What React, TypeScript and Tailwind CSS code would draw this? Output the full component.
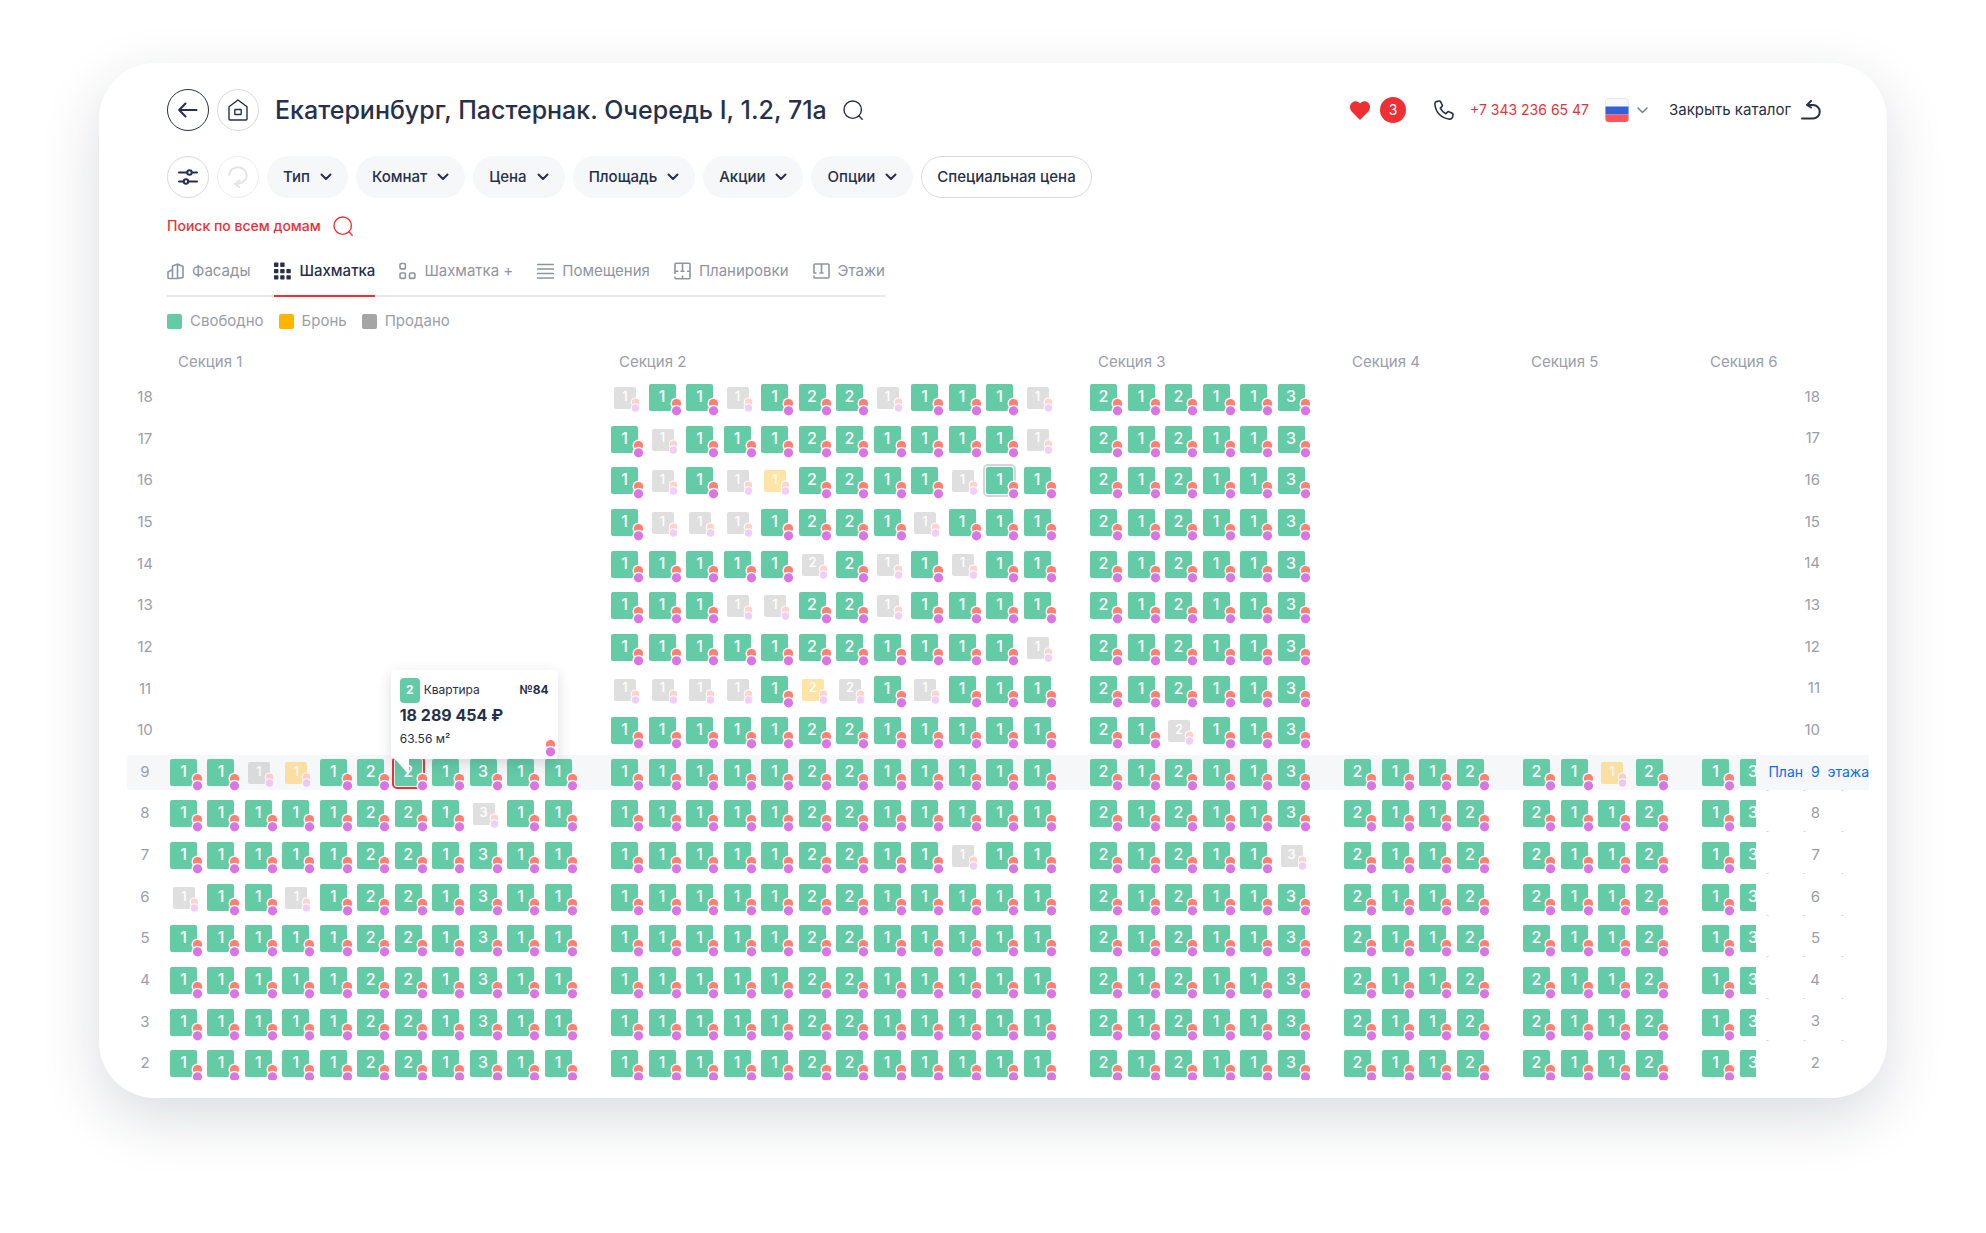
import type { ReactNode } from "react";
import clsx from "clsx";

type Floor = { number: number; sections: string[] };

// Room count of each flat. "s" before it marks a sold flat, "b" a booked one,
// "*" the flat under the pointer, "!" the open one; "-" is a flat without a count.
const S1 = "1 1 1 1 1 2 2 1 3 1 1";
const S2 = "1 1 1 1 1 2 2 1 1 1 1 1";
const S3 = "2 1 2 1 1 3";
const S4 = "2 1 1 2";
const S6 = "1 3 - -";

const floors: Floor[] = [
  { number: 18, sections: ["", "s1 1 1 s1 1 2 2 s1 1 1 1 s1", S3, "", "", ""] },
  { number: 17, sections: ["", "1 s1 1 1 1 2 2 1 1 1 1 s1", S3, "", "", ""] },
  { number: 16, sections: ["", "1 s1 1 s1 b1 2 2 1 1 s1 *1 1", S3, "", "", ""] },
  { number: 15, sections: ["", "1 s1 s1 s1 1 2 2 1 s1 1 1 1", S3, "", "", ""] },
  { number: 14, sections: ["", "1 1 1 1 1 s2 2 s1 1 s1 1 1", S3, "", "", ""] },
  { number: 13, sections: ["", "1 1 1 s1 s1 2 2 s1 1 1 1 1", S3, "", "", ""] },
  { number: 12, sections: ["", "1 1 1 1 1 2 2 1 1 1 1 s1", S3, "", "", ""] },
  { number: 11, sections: ["", "s1 s1 s1 s1 1 b2 s2 1 s1 1 1 1", S3, "", "", ""] },
  { number: 10, sections: ["", S2, "2 1 s2 1 1 3", "", "", ""] },
  { number: 9, sections: ["1 1 s1 b1 1 2 !2 1 3 1 1", S2, S3, S4, "2 1 b1 2", S6] },
  { number: 8, sections: ["1 1 1 1 1 2 2 1 s3 1 1", S2, S3, S4, S4, S6] },
  { number: 7, sections: [S1, "1 1 1 1 1 2 2 1 1 s1 1 1", "2 1 2 1 1 s3", S4, S4, S6] },
  { number: 6, sections: ["s1 1 1 s1 1 2 2 1 3 1 1", S2, S3, S4, S4, S6] },
  { number: 5, sections: [S1, S2, S3, S4, S4, S6] },
  { number: 4, sections: [S1, S2, S3, S4, S4, S6] },
  { number: 3, sections: [S1, S2, S3, S4, S4, S6] },
  { number: 2, sections: [S1, S2, S3, S4, S4, S6] },
];

const sectionGrids = [
  "w-[412px] grid-cols-11",
  "w-[450px] grid-cols-12",
  "w-[225px] grid-cols-6",
  "w-[150px] grid-cols-4",
  "w-[150px] grid-cols-4",
  "w-[150px] grid-cols-4",
];

const filters = ["Тип", "Комнат", "Цена", "Площадь", "Акции", "Опции"];

const legend = [
  { label: "Свободно", color: "bg-[#63cba6]" },
  { label: "Бронь", color: "bg-[#ffb400]" },
  { label: "Продано", color: "bg-[#a5a5a5]" },
];

function SearchIcon() {
  return (
    <svg width="20" height="20" viewBox="0 0 20 20" fill="none" stroke="currentColor" strokeWidth="1.4" strokeLinecap="round">
      <circle cx="9.7" cy="9.7" r="8.7" />
      <path d="M15.8 15.8 19.2 19.2" />
    </svg>
  );
}

function ChevronIcon() {
  return (
    <svg width="12" height="8" viewBox="0 0 12 8" fill="none" stroke="currentColor" strokeWidth="2" strokeLinecap="round" strokeLinejoin="round">
      <path d="M1.5 1.5 6 6 10.5 1.5" />
    </svg>
  );
}

function TabIcon({ children }: { children: ReactNode }) {
  return (
    <svg width="17" height="18" viewBox="0 0 17 18" fill="none" stroke="currentColor" strokeWidth="1.6" strokeLinejoin="round">
      {children}
    </svg>
  );
}

const tabs = [
  {
    label: "Фасады",
    icon: (
      <TabIcon>
        <path d="M5.5 15.5V4L10 2.2h1L16 4.500v11L10.500 16.500H2a1 1 0 0 1-1-1V10l4.500-2.500M10.500 2.200v14" />
      </TabIcon>
    ),
  },
  {
    label: "Шахматка",
    active: true,
    icon: (
      <TabIcon>
        <g fill="currentColor" stroke="none">
          <rect x="0" y=".6" width="4.4" height="4.4" rx=".8" />
          <rect x="6.2" y=".6" width="4.4" height="4.4" rx=".8" />
          <rect x="0" y="6.900" width="4.4" height="4.4" rx=".8" />
          <rect x="6.2" y="6.900" width="4.4" height="4.4" rx=".8" />
          <rect x="12.4" y="6.900" width="4.4" height="4.4" rx=".8" />
          <rect x="0" y="13.200" width="4.4" height="4.4" rx=".8" />
          <rect x="6.2" y="13.200" width="4.4" height="4.4" rx=".8" />
          <rect x="12.4" y="13.200" width="4.4" height="4.4" rx=".8" />
        </g>
      </TabIcon>
    ),
  },
  {
    label: "Шахматка +",
    icon: (
      <TabIcon>
        <rect x="1" y="1.500" width="5.400" height="5.400" rx="1.200" />
        <rect x="1" y="11" width="5.400" height="5.400" rx="1.200" />
        <rect x="10.500" y="11" width="5.400" height="5.400" rx="1.200" />
      </TabIcon>
    ),
  },
  {
    label: "Помещения",
    icon: (
      <TabIcon>
        <path d="M0 2.500h17M0 7h17M0 11.500h17M0 16h17" />
      </TabIcon>
    ),
  },
  {
    label: "Планировки",
    icon: (
      <TabIcon>
        <path d="M1 12V2.300a1 1 0 0 1 1-1h13a1 1 0 0 1 1 1v13.500a1 1 0 0 1-1 1H2a1 1 0 0 1-1-1V14.500" />
        <path d="M8.500 1.300v8M1 9.300h3.500M6.500 9.300h4M13 9.300h3M8.500 13.500v3" />
      </TabIcon>
    ),
  },
  {
    label: "Этажи",
    icon: (
      <TabIcon>
        <path d="M1 13.500V15a1 1 0 0 0 1 1h13a1 1 0 0 0 1-1V3a1 1 0 0 0-1-1H2a1 1 0 0 0-1 1v8h2.500M8.500 2v9M6.500 11h4" />
      </TabIcon>
    ),
  },
];

function Marks({ className }: { className: string }) {
  return (
    <svg viewBox="0 0 13 20" className={clsx("absolute", className)}>
      <circle cx="6.500" cy="6.500" r="6" fill="#fff" />
      <circle cx="6.500" cy="6.500" r="4.600" fill="#ff8071" />
      <circle cx="6.500" cy="13.800" r="6" fill="#fff" />
      <circle cx="6.500" cy="13.800" r="4.600" fill="#d976e3" />
    </svg>
  );
}

function FlatTooltip() {
  return (
    <div className="absolute bottom-full -left-1 z-20 h-[89px] w-[167px] rounded-sm bg-white px-[9px] pt-2 text-left text-[#26304a] shadow-[0_4px_14px_rgba(31,42,68,0.16)]">
      <div className="flex items-center gap-1">
        <span className="flex h-[25px] w-5 items-center justify-center rounded-sm bg-[#63cba6] text-xs font-bold text-white">2</span>
        <span className="text-xs">Квартира</span>
        <span className="ml-auto text-xs font-bold">№84</span>
      </div>
      <p className="text-base leading-6 font-bold">18 289 454 ₽</p>
      <p className="text-xs leading-6">63.56 м²</p>
      <Marks className="right-px bottom-px h-5 w-[13px]" />
      <svg className="absolute top-full left-1" width="14" height="16" viewBox="0 0 14 16">
        <path d="M0 0h14v16z" fill="#fff" />
      </svg>
    </div>
  );
}

function Flat({ code }: { code: string }) {
  const rooms = code === "-" ? "" : code.slice(-1);
  const flag = code.length > 1 ? code[0] : "";

  if (flag === "s" || flag === "b") {
    return (
      <button type="button" className="relative m-[3px] size-[22px] self-start opacity-35">
        <span
          className={clsx(
            "flex size-full items-center justify-center rounded-xs pb-[3px] text-[13px] font-medium text-white",
            flag === "s" ? "bg-[#a5a5a5]" : "bg-[#ffb400]",
          )}
        >
          {rooms}
        </span>
        <Marks className="top-[10px] left-4 h-4 w-[11px]" />
      </button>
    );
  }

  return (
    <div className="relative size-[27px]">
      <button
        type="button"
        className={clsx(
          "flex size-full items-center justify-center rounded-xs bg-[#63cba6] pb-[3px] text-base font-medium text-white",
          flag === "*" && "outline-2 outline-offset-1 outline-[#d3d6da]",
          flag === "!" && "outline-2 outline-offset-1 outline-[#ee3035]",
        )}
      >
        {rooms}
      </button>
      <Marks className="top-[13px] left-[21px] h-5 w-[13px]" />
      {flag === "!" && <FlatTooltip />}
    </div>
  );
}

function FloorRow({ floor }: { floor: Floor }) {
  const open = floor.number === 9;

  return (
    <div className={clsx("relative flex rounded-l pt-1", open && "bg-[#f6f7f9]")}>
      <span className="w-[43px] shrink-0 pr-[7px] text-center text-[15px] leading-[26px] text-[#9a9eaa]">{floor.number}</span>
      <div className="flex gap-[29px]">
        {floor.sections.map((flats, i) => (
          <div key={i} className={clsx("grid shrink-0", sectionGrids[i])}>
            {flats && flats.split(" ").map((code, j) => <Flat key={j} code={code} />)}
          </div>
        ))}
      </div>
      <div
        className={clsx(
          "absolute top-0 right-0 flex h-[35px] w-[113px] items-center justify-end pb-px",
          open ? "bg-[#f6f7f9]" : "bg-white pr-[49px]",
        )}
      >
        {open ? (
          <a href="#plan" className="text-sm whitespace-nowrap text-[#0b6cf5]">
            План&nbsp; 9 &nbsp;этажа
          </a>
        ) : (
          <span className="text-[15px] text-[#9a9eaa]">{floor.number}</span>
        )}
      </div>
    </div>
  );
}

function Header() {
  return (
    <header className="flex items-center justify-between">
      <div className="flex items-center gap-2">
        <button type="button" aria-label="Назад" className="flex size-[42px] items-center justify-center rounded-full border border-[#26304a]">
          <svg width="20" height="16" viewBox="0 0 20 16" fill="none" stroke="currentColor" strokeWidth="2" strokeLinecap="round" strokeLinejoin="round">
            <path d="M18.500 8H1.500M7.500 1.500 1.200 8l6.300 6.500" />
          </svg>
        </button>
        <button type="button" aria-label="Главная" className="flex size-[42px] items-center justify-center rounded-full border border-[#d9dade]">
          <svg width="20" height="22" viewBox="0 0 20 22" fill="none" stroke="currentColor" strokeWidth="1.400" strokeLinejoin="round">
            <path d="M1 7.800 10 1l9 6.800V20a1 1 0 0 1-1 1H2a1 1 0 0 1-1-1z" />
            <rect x="6.800" y="10.500" width="6.400" height="5" rx=".6" />
          </svg>
        </button>
        <h1 className="ml-2 text-[25px] leading-8 font-medium whitespace-nowrap">Екатеринбург, Пастернак. Очередь I, 1.2, 71а</h1>
        <button type="button" aria-label="Поиск" className="ml-2">
          <SearchIcon />
        </button>
      </div>
      <div className="flex items-center">
        <svg width="20" height="19" viewBox="0 0 20 19" fill="#ee3035">
          <path d="M10 19 1.600 10.400C-.6 8-.5 4.200 1.600 2 3.900-.4 7.600-.2 10 2.600 12.400-.2 16.100-.4 18.400 2c2.100 2.200 2.200 6 0 8.400z" />
        </svg>
        <span className="ml-2.5 flex size-[26px] items-center justify-center rounded-full bg-[#ee3035] text-sm text-white">3</span>
        <svg className="ml-7" width="20" height="20" viewBox="0 0 20 20" fill="none" stroke="currentColor" strokeWidth="1.600" strokeLinejoin="round">
          <path d="M5.200 1 2.400 1.600C1.200 2 .8 3 .9 4.200 1.600 12.500 7.500 18.400 15.800 19.100c1.200.1 2.200-.3 2.600-1.500l.6-2.800c.1-.7-.2-1.200-.8-1.500l-3.200-1.500c-.6-.3-1.200-.1-1.600.3l-1.500 1.600C9.400 12.500 7.500 10.600 6.300 8.100l1.600-1.500c.4-.4.5-1 .3-1.600L6.700 1.800C6.400 1.200 5.900.9 5.200 1z" />
        </svg>
        <a href="tel:+73432366547" className="ml-4 text-sm text-[#ee3035]">
          +7 343 236 65 47
        </a>
        <button type="button" aria-label="Язык" className="ml-4 flex items-center gap-2 text-[#7e8493]">
          <svg width="24" height="24" viewBox="0 0 24 24">
            <rect x=".5" y=".5" width="23" height="23" rx="3" fill="#f6f8fb" stroke="#e3e8f3" />
            <path d="M.5 8.500h23v8H.5z" fill="#2f61d9" />
            <path d="M.5 16.500h23V21a3 3 0 0 1-3 3h-17a3 3 0 0 1-3-3z" fill="#ff5459" />
          </svg>
          <svg width="11" height="7" viewBox="0 0 11 7" fill="none" stroke="currentColor" strokeWidth="1.600" strokeLinecap="round" strokeLinejoin="round">
            <path d="M1 1l4.500 4.500L10 1" />
          </svg>
        </button>
        <button type="button" className="ml-[21px] flex items-center gap-2.5 text-[15px]">
          Закрыть каталог
          <svg width="20" height="20" viewBox="0 0 20 20" fill="none" stroke="currentColor" strokeWidth="2" strokeLinecap="round" strokeLinejoin="round">
            <path d="M1 18.500h11a6.500 6.500 0 0 0 0-13.500H6.500M10 1 6 5l4 2.500" />
          </svg>
        </button>
      </div>
    </header>
  );
}

function FilterBar() {
  return (
    <div className="mt-[25px] flex gap-2 text-[15px] font-medium">
      <button type="button" aria-label="Параметры" className="flex size-[42px] items-center justify-center rounded-full border border-[#d9dade]">
        <svg width="20" height="16" viewBox="0 0 20 16" fill="none" stroke="currentColor" strokeWidth="2" strokeLinecap="round">
          <path d="M1 3.500h8M14 3.500h5M1 12.500h4.500M10.500 12.500H19" />
          <circle cx="11.500" cy="3.500" r="2.200" />
          <circle cx="8" cy="12.500" r="2.200" />
        </svg>
      </button>
      <button type="button" aria-label="Сбросить" className="flex size-[42px] items-center justify-center rounded-full border border-[#ececee] text-[#e3e4e6]">
        <svg width="20" height="22" viewBox="0 0 20 22" fill="none" stroke="currentColor" strokeWidth="2" strokeLinecap="round" strokeLinejoin="round">
          <path d="M1.200 9a8.700 8.200 0 1 1 10 8.500L7.500 18M11.500 14.500 7.200 18l4 3" />
        </svg>
      </button>
      {filters.map((label) => (
        <button key={label} type="button" className="flex h-[42px] items-center gap-2.5 rounded-full bg-[#f6f7f9] px-4">
          {label}
          <ChevronIcon />
        </button>
      ))}
      <button type="button" className="h-[42px] rounded-full border border-[#d9dade] px-[15px]">
        Специальная цена
      </button>
    </div>
  );
}

export default function App() {
  return (
    <div className="min-h-screen bg-white px-[99px] pt-[63px] pb-[135px] font-[Inter,sans-serif] text-[#26304a]">
      <main className="overflow-hidden rounded-[56px] bg-white pt-[26px] pb-[18px] shadow-[0_20px_60px_rgba(30,40,70,0.16)]">
        <div className="pr-[66px] pl-[68px]">
          <Header />
          <FilterBar />
          <a href="#search" className="mt-[18px] flex w-fit items-center gap-3 text-sm leading-5 font-medium text-[#ee3035]">
            Поиск по всем домам
            <SearchIcon />
          </a>
          <nav className="mt-[25px] flex w-fit gap-6 border-b-2 border-[#e9e9eb] text-[15px] leading-5">
            {tabs.map((tab) => (
              <a
                key={tab.label}
                href="#view"
                className={clsx(
                  "-mb-0.5 flex items-center gap-2 border-b-2 pb-[14px] whitespace-nowrap",
                  tab.active ? "border-[#ee3035] font-medium" : "border-transparent text-[#8f94a1]",
                )}
              >
                {tab.icon}
                {tab.label}
              </a>
            ))}
          </nav>
          <ul className="mt-[14px] flex gap-[15px] text-[15px] leading-5 text-[#9a9eaa]">
            {legend.map((item) => (
              <li key={item.label} className="flex items-center gap-2">
                <span className={clsx("size-[15px] rounded-xs", item.color)} />
                {item.label}
              </li>
            ))}
          </ul>
        </div>
        <div className="overflow-hidden pr-[18px] pl-7">
          <div className="mt-[21px] flex gap-[29px] pl-[43px] text-[15px] leading-5 text-[#9a9eaa]">
            {sectionGrids.map((grid, i) => (
              <h2 key={i} className={clsx("shrink-0 pl-2", grid)}>
                Секция {i + 1}
              </h2>
            ))}
          </div>
          <div className="mt-2 h-[700px] overflow-hidden">
            <div className="grid h-[702px] auto-rows-fr gap-1.5">
              {floors.map((floor) => (
                <FloorRow key={floor.number} floor={floor} />
              ))}
            </div>
          </div>
        </div>
      </main>
    </div>
  );
}
